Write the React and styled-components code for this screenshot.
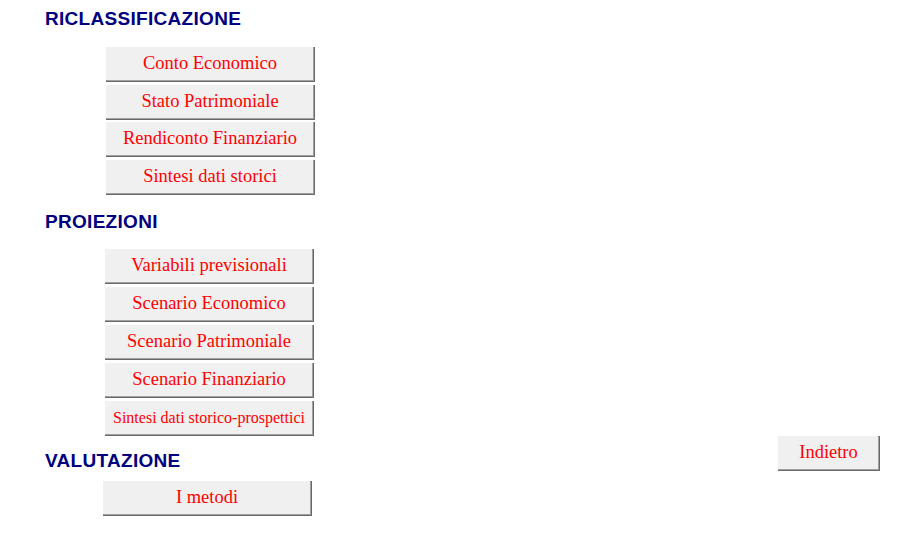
import styled, { createGlobalStyle } from "styled-components";

const GlobalStyle = createGlobalStyle`
    html, body {
        margin: 0;
        padding: 0;
        background: #ffffff;
    }
`;

const sections = [
    {
        title: "RICLASSIFICAZIONE",
        top: 9,
        gap: 18,
        spacing: 2.7,
        indent: 61,
        items: [
            { label: "Conto Economico" },
            { label: "Stato Patrimoniale" },
            { label: "Rendiconto Finanziario" },
            { label: "Sintesi dati storici" },
        ],
    },
    {
        title: "PROIEZIONI",
        top: 17,
        gap: 17,
        spacing: 3,
        indent: 60,
        items: [
            { label: "Variabili previsionali" },
            { label: "Scenario Economico" },
            { label: "Scenario Patrimoniale" },
            { label: "Scenario Finanziario" },
            { label: "Sintesi dati storico-prospettici", small: true },
        ],
    },
    {
        title: "VALUTAZIONE",
        top: 15,
        gap: 10,
        spacing: 3,
        indent: 58,
        items: [{ label: "I metodi" }],
    },
];

const App = () => {
    return (
        <>
            <GlobalStyle />
            <Page>
                <Menu>
                    {sections.map((section) => (
                        <Section key={section.title} $top={section.top}>
                            <Title>{section.title}</Title>
                            <ButtonList
                                $gap={section.gap}
                                $spacing={section.spacing}
                                $indent={section.indent}
                            >
                                {section.items.map((item) => (
                                    <SheetButton key={item.label} $small={item.small}>
                                        {item.label}
                                    </SheetButton>
                                ))}
                            </ButtonList>
                        </Section>
                    ))}
                </Menu>
                <Aside>
                    <SheetButton $width={102}>Indietro</SheetButton>
                </Aside>
            </Page>
        </>
    );
};

export default App;

const Page = styled.div`
    width: 920px;
    height: 551px;
    display: flex;
    justify-content: space-between;
    box-sizing: border-box;
    padding: 0 40px 0 45px;
`;

const Menu = styled.div`
    display: flex;
    flex-direction: column;
`;

const Section = styled.section`
    display: flex;
    flex-direction: column;
    margin-top: ${(p) => p.$top}px;
`;

const Title = styled.h2`
    margin: 0;
    font-family: "Liberation Sans", Arial, sans-serif;
    font-weight: bold;
    font-size: 19px;
    line-height: 20px;
    letter-spacing: 0.3px;
    color: #000080;
`;

const ButtonList = styled.div`
    display: flex;
    flex-direction: column;
    gap: ${(p) => p.$spacing}px;
    margin-top: ${(p) => p.$gap}px;
    margin-left: ${(p) => p.$indent}px;
`;

const SheetButton = styled.button`
    box-sizing: border-box;
    width: ${(p) => p.$width || 209}px;
    height: 35px;
    padding: 0 0 1px;
    background: #f0f0f0;
    border: none;
    border-right: 1px solid #696969;
    border-bottom: 1px solid #696969;
    box-shadow: inset -1px -1px 0 #a0a0a0;
    font-family: "Liberation Serif", "Times New Roman", serif;
    font-size: ${(p) => (p.$small ? 16 : 18.5)}px;
    color: #ff0000;
    text-align: center;
    cursor: pointer;
`;

const Aside = styled.div`
    padding-top: 436px;
`;
